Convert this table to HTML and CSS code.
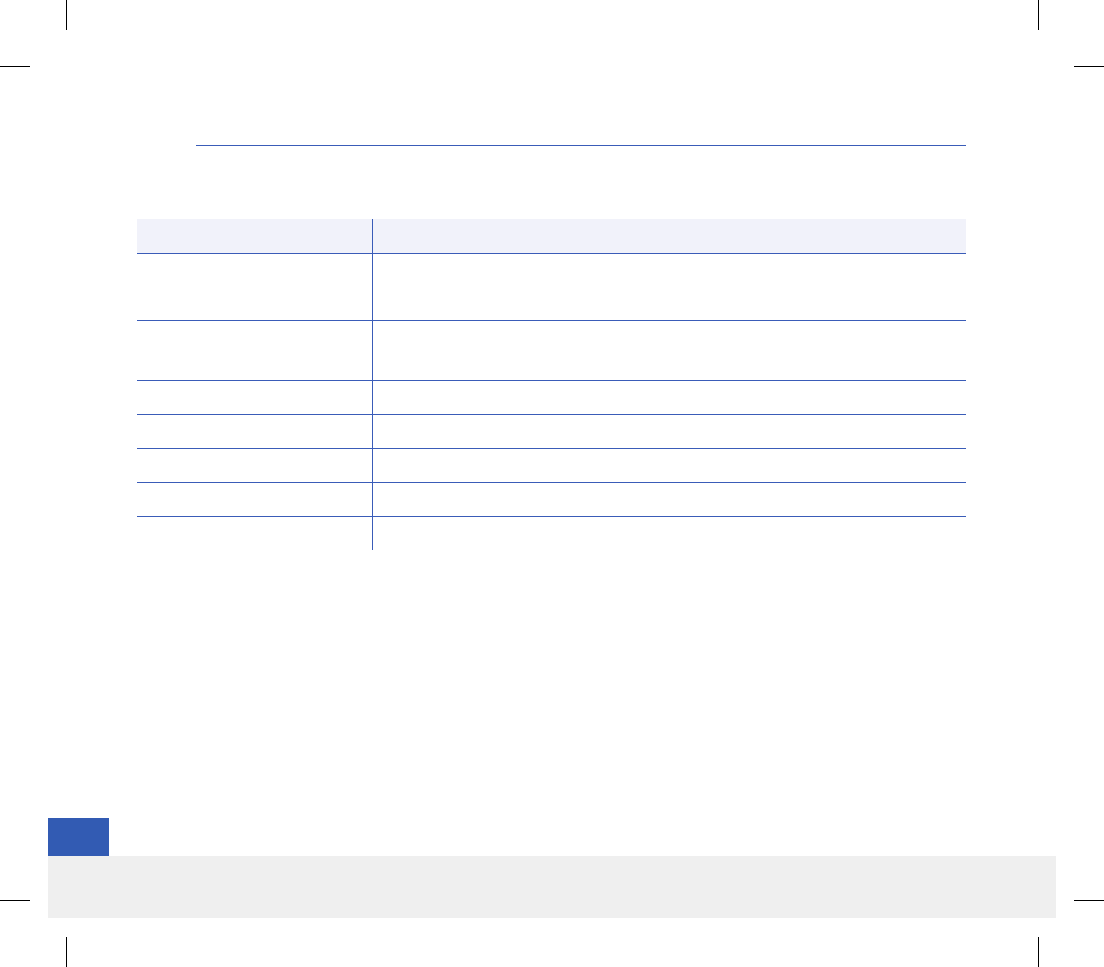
FILE: index.html
```html
<!DOCTYPE html>
<html lang="en">
<head>
<meta charset="utf-8">
<title>Page</title>
<link rel="stylesheet" href="styles.css">
</head>
<body>
<div class="page">
  <span class="mark mark-v mark-tl-v"></span>
  <span class="mark mark-h mark-tl-h"></span>
  <span class="mark mark-v mark-tr-v"></span>
  <span class="mark mark-h mark-tr-h"></span>
  <span class="mark mark-h mark-bl-h"></span>
  <span class="mark mark-v mark-bl-v"></span>
  <span class="mark mark-h mark-br-h"></span>
  <span class="mark mark-v mark-br-v"></span>

  <div class="content">
    <div class="title-rule"></div>
    <table class="spec">
      <thead>
        <tr><th class="c1"></th><th class="c2"></th></tr>
      </thead>
      <tbody>
        <tr class="r-tall"><td class="c1"></td><td class="c2"></td></tr>
        <tr class="r-mid"><td class="c1"></td><td class="c2"></td></tr>
        <tr class="r-std"><td class="c1"></td><td class="c2"></td></tr>
        <tr class="r-std"><td class="c1"></td><td class="c2"></td></tr>
        <tr class="r-std"><td class="c1"></td><td class="c2"></td></tr>
        <tr class="r-std"><td class="c1"></td><td class="c2"></td></tr>
        <tr class="r-std r-last"><td class="c1"></td><td class="c2"></td></tr>
      </tbody>
    </table>
  </div>

  <footer class="footer">
    <div class="footer-tab"></div>
    <div class="footer-bar"></div>
  </footer>
</div>
</body>
</html>
```

FILE: styles.css
```css
html, body {
  margin: 0;
  padding: 0;
  background: #ffffff;
  font-family: "Liberation Sans", Arial, sans-serif;
}

.page {
  position: relative;
  width: 1104px;
  height: 967px;
  overflow: hidden;
  display: flex;
  flex-direction: column;
}

/* print crop marks */
.mark {
  position: absolute;
  background: #000000;
}
.mark-v { width: 1px; height: 30px; }
.mark-h { width: 30px; height: 1px; }
.mark-tl-v { left: 66px; top: 0; }
.mark-tl-h { left: 0; top: 66px; }
.mark-tr-v { left: 1038px; top: 0; }
.mark-tr-h { left: 1074px; top: 66px; }
.mark-bl-h { left: 0; top: 900px; }
.mark-bl-v { left: 66px; top: 937px; }
.mark-br-h { left: 1074px; top: 900px; }
.mark-br-v { left: 1038px; top: 937px; }

.content {
  padding-top: 145px;
}

.title-rule {
  margin-left: 196px;
  width: 770px;
  height: 1px;
  background: #3a5cb8;
}

.spec {
  margin-top: 73px;
  margin-left: 137px;
  width: 829px;
  border-collapse: collapse;
  table-layout: fixed;
}

.spec th,
.spec td {
  padding: 0;
}

.spec .c1 {
  width: 235px;
  border-right: 1px solid #3a5cb8;
}

.spec thead th {
  height: 34px;
  background: #f1f2fa;
  border-bottom: 1px solid #3a5cb8;
}

.spec tbody tr {
  border-bottom: 1px solid #3a5cb8;
}
.spec tbody tr.r-last {
  border-bottom: none;
}

.spec .r-tall td { height: 66px; }
.spec .r-mid td { height: 59px; }
.spec .r-std td { height: 33px; }

.footer {
  margin-top: auto;
  margin-bottom: 49px;
  margin-left: 48px;
  display: flex;
  flex-direction: column;
}

.footer-tab {
  width: 61px;
  height: 38px;
  background: #325bb3;
}

.footer-bar {
  width: 1008px;
  height: 62px;
  background: #efefef;
}
```
